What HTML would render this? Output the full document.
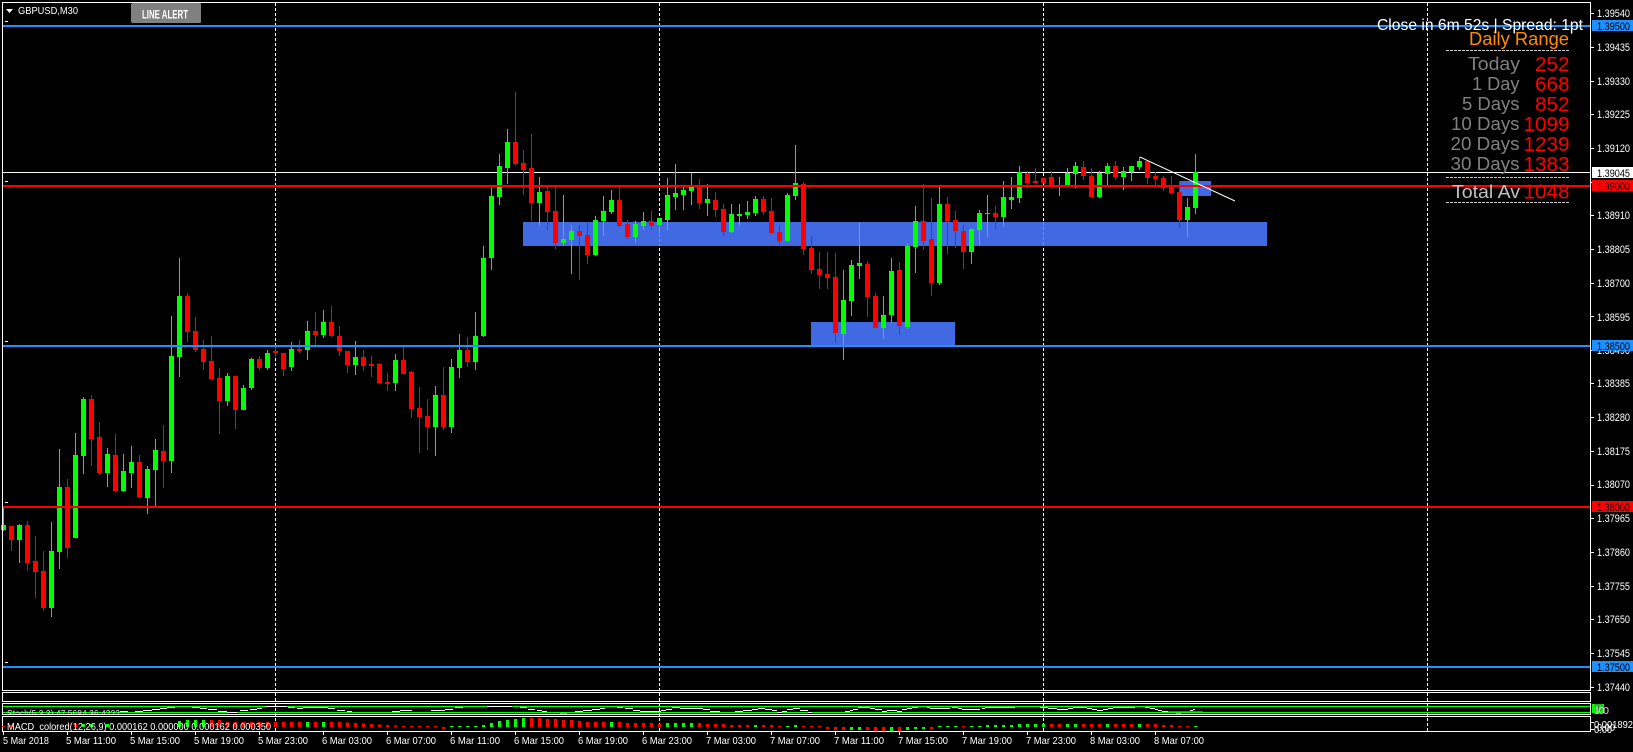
<!DOCTYPE html>
<html lang="en">
<head>
<meta charset="utf-8">
<title>GBPUSD,M30</title>
<style>
html,body{margin:0;padding:0;background:#000;width:1633px;height:752px;overflow:hidden}
svg{display:block;position:absolute;left:0;top:0}
text{font-family:"Liberation Sans",sans-serif;white-space:pre}
.p{font-size:11px;fill:#fff}
.k{font-size:11px;fill:#000}
.t{font-size:10.5px;fill:#fff}
.l{font-size:18.8px;fill:#808080}
.n{font-size:20.7px;fill:#f00}
</style>
</head>
<body>
<svg width="1633" height="752" viewBox="0 0 1633 752" xmlns="http://www.w3.org/2000/svg">
<defs><clipPath id="st"><rect x="3" y="704" width="400" height="10"/></clipPath></defs>
<rect width="1633" height="752" fill="#000"/>

<!-- grid -->
<path shape-rendering="crispEdges" d="M275.5 3V731M659.5 3V731M1043.5 3V731M1427.5 3V731" stroke="#fff" stroke-width="1" stroke-dasharray="3 2" fill="none"/>

<!-- bands -->
<g shape-rendering="crispEdges" fill="#4169e1">
<rect x="523" y="222" width="744" height="24"/>
<rect x="811" y="322" width="144" height="24"/>
<rect x="1180" y="181" width="31" height="15"/>
</g>
<path shape-rendering="crispEdges" d="M659.5 234V246M1043.5 222V246" stroke="#b8944f" stroke-width="1" stroke-dasharray="3 2" fill="none"/>

<!-- white bid line -->
<rect x="3" y="172" width="1587" height="1" fill="#fff" shape-rendering="crispEdges"/>

<!-- candles: green wicks -->
<path shape-rendering="crispEdges" fill="none" stroke="#0f0" stroke-width="1" d="M3.5 507V531M19.5 524V563M51.5 522V617M59.5 449V569M75.5 433V538M83.5 397V474M107.5 448V487M123.5 454V492M131.5 446V488M147.5 466V514M155.5 439V506M171.5 316V473M179.5 258V377M227.5 373V406M243.5 385V410M251.5 358V390M267.5 350V370M291.5 342V371M307.5 321V360M323.5 310V338M355.5 341V375M395.5 354V391M435.5 386V456M451.5 359V433M459.5 334V378M475.5 312V370M483.5 246V337M491.5 188V270M499.5 154V205M507.5 129V184M539.5 177V226M563.5 195V246M571.5 225V274M595.5 216V256M603.5 196V236M611.5 190V214M635.5 221V243M643.5 212V230M659.5 218V233M667.5 178V230M675.5 164V210M683.5 187V210M691.5 173V205M707.5 184V216M731.5 204V233M739.5 204V226M747.5 201V219M755.5 196V216M787.5 193V242M795.5 145V200M843.5 270V360M851.5 260V316M859.5 223V279M883.5 296V339M891.5 258V323M907.5 243V329M915.5 206V273M939.5 187V285M971.5 229V264M979.5 210V245M987.5 195V237M1003.5 181V227M1011.5 177V209M1019.5 166V203M1059.5 177V196M1067.5 168V185M1075.5 162V188M1099.5 171V198M1107.5 163V185M1123.5 167V190M1131.5 166V181M1139.5 157V170M1187.5 198V237M1195.5 154V214"/>
<!-- candles: green bodies -->
<path shape-rendering="crispEdges" fill="none" stroke="#0f0" stroke-width="5" d="M3.5 525V530M19.5 525V540M51.5 551V608M59.5 487V552M75.5 455V538M83.5 399V456M107.5 454V473M123.5 471V491M131.5 462V473M147.5 469V498M155.5 450V470M171.5 356V461M179.5 296V357M227.5 376V401M243.5 388V410M251.5 359V388M267.5 353V368M291.5 349V367M307.5 331V350M323.5 322V335M355.5 357V365M395.5 360V383M435.5 395V427M451.5 367V427M459.5 350V368M475.5 336V362M483.5 258V336M491.5 196V258M499.5 166V197M507.5 142V168M539.5 192V203M563.5 239V243M571.5 231V240M595.5 220V255M603.5 211V221M611.5 200V212M635.5 224V237M643.5 221V226M659.5 218V225M667.5 195V220M675.5 193V197M683.5 190V195M691.5 187V191M707.5 199V203M731.5 214V232M739.5 214V216M747.5 212V215M755.5 199V213M787.5 195V241M795.5 183V196M843.5 300V334M851.5 265V301M859.5 263V266M883.5 315V328M891.5 271V315M907.5 246V327M915.5 221V247M939.5 204V283M971.5 229V252M979.5 213V230M987.5 213V214M1003.5 197V217M1011.5 197V200M1019.5 172V198M1059.5 185V187M1067.5 173V185M1075.5 166V174M1099.5 173V197M1107.5 166V174M1123.5 171V177M1131.5 166V172M1139.5 161V167M1187.5 207V220M1195.5 172V208"/>
<!-- candles: red wicks -->
<path shape-rendering="crispEdges" fill="none" stroke="#f00" stroke-width="1" d="M11.5 526V551M27.5 521V571M35.5 536V598M43.5 551V611M67.5 479V558M91.5 395V466M99.5 422V475M115.5 434V492M139.5 455V498M163.5 425V488M187.5 293V342M195.5 317V352M203.5 340V370M211.5 336V380M219.5 368V434M235.5 376V429M259.5 356V370M275.5 347V357M283.5 353V376M299.5 340V353M315.5 312V345M331.5 306V337M339.5 326V356M347.5 351V373M363.5 350V371M371.5 356V377M379.5 363V384M387.5 373V391M403.5 347V374M411.5 371V418M419.5 387V453M427.5 399V450M443.5 367V430M467.5 337V367M515.5 92V166M523.5 150V195M531.5 134V221M547.5 186V230M555.5 186V249M579.5 225V280M587.5 222V264M619.5 186V227M627.5 220V239M651.5 211V230M699.5 179V209M715.5 192V217M723.5 204V236M763.5 196V215M771.5 198V234M779.5 225V245M803.5 182V255M811.5 236V274M819.5 252V289M827.5 252V289M835.5 253V343M867.5 261V317M875.5 293V328M899.5 262V335M923.5 184V250M931.5 198V296M947.5 197V254M955.5 211V248M963.5 225V269M995.5 206V229M1027.5 171V188M1035.5 168V183M1043.5 178V183M1051.5 171V185M1083.5 161V180M1091.5 168V197M1115.5 161V180M1147.5 161V184M1155.5 172V185M1163.5 176V191M1171.5 176V194M1179.5 181V228"/>
<!-- candles: red bodies -->
<path shape-rendering="crispEdges" fill="none" stroke="#f00" stroke-width="5" d="M11.5 526V540M27.5 525V563M35.5 561V572M43.5 571V608M67.5 487V548M91.5 399V439M99.5 437V473M115.5 455V491M139.5 462V497M163.5 451V461M187.5 296V332M195.5 331V350M203.5 349V362M211.5 361V379M219.5 378V401M235.5 376V410M259.5 359V368M275.5 351V353M283.5 353V369M299.5 349V351M315.5 331V335M331.5 322V336M339.5 336V351M347.5 351V365M363.5 357V366M371.5 364V366M379.5 364V383M387.5 382V384M403.5 360V374M411.5 372V409M419.5 408V417M427.5 416V427M443.5 395V427M467.5 350V362M515.5 142V164M523.5 163V170M531.5 168V203M547.5 191V212M555.5 211V243M579.5 231V236M587.5 235V255M619.5 200V226M627.5 224V237M651.5 221V226M699.5 187V203M715.5 200V210M723.5 209V232M763.5 199V212M771.5 211V233M779.5 232V241M803.5 184V249M811.5 248V270M819.5 269V275M827.5 274V278M835.5 277V333M867.5 264V297M875.5 296V328M899.5 270V326M923.5 221V241M931.5 239V283M947.5 204V221M955.5 220V231M963.5 231V252M995.5 213V217M1027.5 173V183M1035.5 181V183M1043.5 178V183M1051.5 177V185M1083.5 167V176M1091.5 176V197M1115.5 166V177M1147.5 161V178M1155.5 176V179M1163.5 178V188M1171.5 187V193M1179.5 192V220"/>

<!-- horizontal levels -->
<g shape-rendering="crispEdges">
<rect x="3" y="25" width="1587" height="2" fill="#1e90ff"/>
<rect x="3" y="185" width="1587" height="2" fill="#f00"/>
<rect x="3" y="345" width="1587" height="2" fill="#1e90ff"/>
<rect x="3" y="506" width="1587" height="2" fill="#f00"/>
<rect x="3" y="666" width="1587" height="2" fill="#1e90ff"/>
<path d="M5 21.5H8M5 181.5H8M5 341.5H8M5 502.5H8M5 662.5H8" stroke="#fff" stroke-width="1"/>
</g>

<!-- trend line -->
<line x1="1140" y1="157" x2="1235" y2="201" stroke="#fff" stroke-width="1"/>

<!-- frames -->
<g shape-rendering="crispEdges" fill="#fff">
<rect x="2" y="2" width="1589" height="1"/>
<rect x="2" y="2" width="1" height="689"/>
<rect x="1590" y="2" width="1" height="689"/>
<rect x="2" y="690" width="1589" height="1"/>
<rect x="2" y="692" width="1589" height="1"/>
<rect x="2" y="692" width="1" height="10"/>
<rect x="1590" y="692" width="1" height="10"/>
<rect x="2" y="701" width="1589" height="1"/>
<rect x="2" y="703" width="1589" height="1"/>
<rect x="2" y="703" width="1" height="12"/>
<rect x="1590" y="703" width="1" height="12"/>
<rect x="2" y="714" width="1589" height="1"/>
<rect x="2" y="716" width="1589" height="1"/>
<rect x="2" y="716" width="1" height="16"/>
<rect x="1590" y="716" width="1" height="16"/>
<rect x="2" y="731" width="1589" height="1"/>
</g>

<!-- stochastic pane -->
<g shape-rendering="crispEdges">
<rect x="3" y="706" width="1587" height="1" fill="#0f0"/>
<rect x="3" y="712" width="1587" height="1" fill="#0f0"/>
<path fill="none" stroke="#fff" stroke-width="1" d="M120 711.5H128M135 711.5H143M143 710.5H152M152 709.5H160M160 708.5H167M167 707.5H175M192 707.5H200M200 708.5H207M208 709.5H217M218 711.5H227M227 712.5H237M240 710.5H248M250 709.5H257M257 708.5H262M265 706.5H287M288 707.5H295M297 708.5H303M303 707.5H328M328 708.5H335M337 710.5H345M347 711.5H352M392 711.5H400M400 710.5H412M431 710.5H445M445 709.5H453M455 707.5H463M487 706.5H512M520 707.5H527M528 709.5H535M537 710.5H542M542 711.5H547M575 711.5H583M583 710.5H592M592 709.5H600M600 708.5H605M617 707.5H623M625 708.5H633M633 710.5H640M640 711.5H661M661 710.5H666M666 709.5H672M672 707.5H680M680 708.5H703M703 709.5H710M710 711.5H720M735 711.5H743M743 710.5H752M752 709.5H758M758 708.5H765M765 709.5H772M772 710.5H777M777 712.5H782M782 711.5H787M787 709.5H793M793 708.5H800M800 710.5H808M808 712.5H812M845 711.5H850M850 710.5H853M853 709.5H858M858 707.5H870M870 708.5H875M875 709.5H882M882 711.5H887M887 710.5H897M897 711.5H902M902 709.5H907M907 708.5H912M912 707.5H918M927 707.5H930M930 708.5H950M952 707.5H958M958 708.5H962M962 709.5H980M982 708.5H985M985 707.5H1015M1040 707.5H1048M1048 708.5H1057M1057 709.5H1068M1068 708.5H1073M1073 707.5H1087M1087 708.5H1092M1092 709.5H1097M1097 710.5H1103M1103 709.5H1108M1108 708.5H1113M1113 707.5H1135M1145 707.5H1150M1150 708.5H1155M1155 709.5H1158M1158 710.5H1162M1162 711.5H1168M1190 710.5H1193M1193 709.5H1195"/>
<path fill="none" stroke="#2d6fb5" stroke-width="1" d="M1168 711.5H1203"/>
<path fill="none" stroke="#0f0" stroke-width="1" d="M560 713.5H567M1176 713.5H1181"/>
</g>
<text clip-path="url(#st)" class="t" x="7" y="717" textLength="113" lengthAdjust="spacingAndGlyphs" style="fill:#ddd">Stoch(5,3,3) 47.5684 36.4222</text>

<!-- MACD histogram -->
<path shape-rendering="crispEdges" fill="none" stroke="#f00" stroke-width="3" d="M3.5 726V727M11.5 725V727M75.5 724V727M107.5 725V727M219.5 720V727M211.5 720V727M227.5 722V727M235.5 722V727M243.5 722V727M251.5 722V727M259.5 722V727M267.5 722V727M275.5 722V727M283.5 722V727M291.5 722V727M299.5 722V727M315.5 722V727M331.5 722V727M339.5 722V727M347.5 722.5V727M355.5 723V727M363.5 723.5V727M371.5 724V727M379.5 724.5V727M387.5 725V727M395.5 725.5V727M403.5 726V727M411.5 726V727M419.5 726V727M427.5 726V727M435.5 726V727M443.5 727V729M531.5 718V727M539.5 718V727M547.5 719V727M555.5 719V727M563.5 720V727M571.5 720V727M579.5 721V727M587.5 722V727M595.5 722V727M603.5 722V727M619.5 722V727M627.5 723V727M635.5 723V727M643.5 723V727M651.5 723V727M659.5 724V727M699.5 723V727M707.5 724V727M715.5 724V727M723.5 724V727M731.5 725V727M739.5 725V727M747.5 725V727M763.5 725V727M771.5 725V727M779.5 726V727M803.5 726V727M811.5 726V727M819.5 726V727M827.5 727V729M835.5 727V730M843.5 727V730M867.5 727V730M875.5 727V731M883.5 727V731M899.5 727V731M931.5 727V729M963.5 726V727M1051.5 724V727M1059.5 724V727M1083.5 724V727M1091.5 724V727M1099.5 724V727M1115.5 724V727M1123.5 724V727M1131.5 724V727M1147.5 724V727M1155.5 724V727M1163.5 725V727M1171.5 725V727M1179.5 726V727M1187.5 726V727"/>
<path shape-rendering="crispEdges" fill="none" stroke="#0f0" stroke-width="3" d="M83.5 724V727M91.5 724V727M107.5 724V727M179.5 721V727M187.5 720V727M195.5 720V727M203.5 720V727M307.5 722V727M323.5 722V727M451.5 726V727M459.5 726V727M467.5 726V727M475.5 726V727M483.5 725V727M491.5 723V727M499.5 721V727M507.5 720V727M515.5 719V727M523.5 718V727M611.5 722V727M667.5 723V727M675.5 723V727M683.5 723V727M691.5 723V727M755.5 725V727M787.5 726V727M795.5 725V727M851.5 727V730M859.5 727V730M891.5 727V731M907.5 727V730M915.5 727V729M923.5 727V729M939.5 726V727M947.5 726V727M955.5 726V727M971.5 726V727M979.5 726V727M987.5 725V727M995.5 725V727M1003.5 725V727M1011.5 725V727M1019.5 724V727M1027.5 724V727M1035.5 724V727M1043.5 724V727M1067.5 724V727M1075.5 724V727M1107.5 724V727M1139.5 724V727M1195.5 726V727"/>
<text class="t" x="7" y="730" textLength="264" lengthAdjust="spacingAndGlyphs">MACD_colored(12,26,9) 0.000162 0.000000 0.000162 0.000350</text>

<!-- price axis ticks -->
<path shape-rendering="crispEdges" stroke="#fff" stroke-width="1" fill="none" d="M1591 13.5H1594M1591 47.5H1594M1591 81.5H1594M1591 114.5H1594M1591 148.5H1594M1591 182.5H1594M1591 215.5H1594M1591 249.5H1594M1591 283.5H1594M1591 316.5H1594M1591 350.5H1594M1591 383.5H1594M1591 417.5H1594M1591 451.5H1594M1591 485.5H1594M1591 518.5H1594M1591 552.5H1594M1591 586.5H1594M1591 619.5H1594M1591 653.5H1594M1591 687.5H1594M1591 722.5H1594M1591 729.5H1594"/>
<g class="p">
<text class="p" x="1597" y="17" textLength="33" lengthAdjust="spacingAndGlyphs">1.39540</text>
<text class="p" x="1597" y="51" textLength="33" lengthAdjust="spacingAndGlyphs">1.39435</text>
<text class="p" x="1597" y="85" textLength="33" lengthAdjust="spacingAndGlyphs">1.39330</text>
<text class="p" x="1597" y="118" textLength="33" lengthAdjust="spacingAndGlyphs">1.39225</text>
<text class="p" x="1597" y="152" textLength="33" lengthAdjust="spacingAndGlyphs">1.39120</text>
<text class="p" x="1597" y="219" textLength="33" lengthAdjust="spacingAndGlyphs">1.38910</text>
<text class="p" x="1597" y="253" textLength="33" lengthAdjust="spacingAndGlyphs">1.38805</text>
<text class="p" x="1597" y="287" textLength="33" lengthAdjust="spacingAndGlyphs">1.38700</text>
<text class="p" x="1597" y="321" textLength="33" lengthAdjust="spacingAndGlyphs">1.38595</text>
<text class="p" x="1597" y="354" textLength="33" lengthAdjust="spacingAndGlyphs">1.38490</text>
<text class="p" x="1597" y="387" textLength="33" lengthAdjust="spacingAndGlyphs">1.38385</text>
<text class="p" x="1597" y="421" textLength="33" lengthAdjust="spacingAndGlyphs">1.38280</text>
<text class="p" x="1597" y="455" textLength="33" lengthAdjust="spacingAndGlyphs">1.38175</text>
<text class="p" x="1597" y="488" textLength="33" lengthAdjust="spacingAndGlyphs">1.38070</text>
<text class="p" x="1597" y="522" textLength="33" lengthAdjust="spacingAndGlyphs">1.37965</text>
<text class="p" x="1597" y="556" textLength="33" lengthAdjust="spacingAndGlyphs">1.37860</text>
<text class="p" x="1597" y="590" textLength="33" lengthAdjust="spacingAndGlyphs">1.37755</text>
<text class="p" x="1597" y="623" textLength="33" lengthAdjust="spacingAndGlyphs">1.37650</text>
<text class="p" x="1597" y="657" textLength="33" lengthAdjust="spacingAndGlyphs">1.37545</text>
<text class="p" x="1597" y="691" textLength="33" lengthAdjust="spacingAndGlyphs">1.37440</text>
</g>

<!-- price axis tags -->
<g shape-rendering="crispEdges">
<rect x="1592" y="20" width="41" height="11" fill="#1e90ff"/>
<rect x="1592" y="167" width="41" height="11" fill="#fff"/>
<rect x="1592" y="180" width="41" height="11" fill="#f00"/>
<rect x="1592" y="340" width="41" height="11" fill="#1e90ff"/>
<rect x="1592" y="501" width="41" height="11" fill="#f00"/>
<rect x="1592" y="661" width="41" height="11" fill="#1e90ff"/>
<rect x="1592" y="704" width="12" height="9" fill="#0f0"/>
</g>
<text class="k" x="1597" y="30" textLength="33" lengthAdjust="spacingAndGlyphs">1.39500</text>
<text class="k" x="1597" y="177" textLength="33" lengthAdjust="spacingAndGlyphs">1.39045</text>
<text class="k" x="1597" y="190" textLength="33" lengthAdjust="spacingAndGlyphs">1.39000</text>
<text class="k" x="1597" y="350" textLength="33" lengthAdjust="spacingAndGlyphs">1.38500</text>
<text class="k" x="1597" y="511" textLength="33" lengthAdjust="spacingAndGlyphs">1.38000</text>
<text class="k" x="1597" y="671" textLength="33" lengthAdjust="spacingAndGlyphs">1.37500</text>
<text x="1594" y="711" style="font-size:10px;fill:#666" textLength="9">90</text>
<text x="1594" y="714" style="font-size:10.5px;fill:#ddd" textLength="15">100</text>
<text class="t" x="1594" y="728" textLength="39" lengthAdjust="spacingAndGlyphs">0.001892</text>
<text class="t" x="1594" y="733" style="font-size:10px" textLength="18" lengthAdjust="spacingAndGlyphs">0.00</text>
<text class="t" x="1597" y="731" style="font-size:10px" textLength="18" lengthAdjust="spacingAndGlyphs">0.00</text>

<!-- time axis -->
<path shape-rendering="crispEdges" stroke="#fff" stroke-width="1" fill="none" d="M3.5 732V735M67.5 732V735M131.5 732V735M195.5 732V735M259.5 732V735M323.5 732V735M387.5 732V735M451.5 732V735M515.5 732V735M579.5 732V735M643.5 732V735M707.5 732V735M771.5 732V735M835.5 732V735M899.5 732V735M963.5 732V735M1027.5 732V735M1091.5 732V735M1155.5 732V735"/>
<text class="t" x="3" y="744" textLength="46" lengthAdjust="spacingAndGlyphs">5 Mar 2018</text>
<text class="t" x="66" y="744" textLength="50" lengthAdjust="spacingAndGlyphs">5 Mar 11:00</text>
<text class="t" x="130" y="744" textLength="50" lengthAdjust="spacingAndGlyphs">5 Mar 15:00</text>
<text class="t" x="194" y="744" textLength="50" lengthAdjust="spacingAndGlyphs">5 Mar 19:00</text>
<text class="t" x="258" y="744" textLength="50" lengthAdjust="spacingAndGlyphs">5 Mar 23:00</text>
<text class="t" x="322" y="744" textLength="50" lengthAdjust="spacingAndGlyphs">6 Mar 03:00</text>
<text class="t" x="386" y="744" textLength="50" lengthAdjust="spacingAndGlyphs">6 Mar 07:00</text>
<text class="t" x="450" y="744" textLength="50" lengthAdjust="spacingAndGlyphs">6 Mar 11:00</text>
<text class="t" x="514" y="744" textLength="50" lengthAdjust="spacingAndGlyphs">6 Mar 15:00</text>
<text class="t" x="578" y="744" textLength="50" lengthAdjust="spacingAndGlyphs">6 Mar 19:00</text>
<text class="t" x="642" y="744" textLength="50" lengthAdjust="spacingAndGlyphs">6 Mar 23:00</text>
<text class="t" x="706" y="744" textLength="50" lengthAdjust="spacingAndGlyphs">7 Mar 03:00</text>
<text class="t" x="770" y="744" textLength="50" lengthAdjust="spacingAndGlyphs">7 Mar 07:00</text>
<text class="t" x="834" y="744" textLength="50" lengthAdjust="spacingAndGlyphs">7 Mar 11:00</text>
<text class="t" x="898" y="744" textLength="50" lengthAdjust="spacingAndGlyphs">7 Mar 15:00</text>
<text class="t" x="962" y="744" textLength="50" lengthAdjust="spacingAndGlyphs">7 Mar 19:00</text>
<text class="t" x="1026" y="744" textLength="50" lengthAdjust="spacingAndGlyphs">7 Mar 23:00</text>
<text class="t" x="1090" y="744" textLength="50" lengthAdjust="spacingAndGlyphs">8 Mar 03:00</text>
<text class="t" x="1154" y="744" textLength="50" lengthAdjust="spacingAndGlyphs">8 Mar 07:00</text>

<!-- chart title -->
<polygon points="6,9 13,9 9.5,13" fill="#fff"/>
<text class="t" x="18" y="14" textLength="60" lengthAdjust="spacingAndGlyphs">GBPUSD,M30</text>

<!-- line alert button -->
<rect x="129" y="2" width="3" height="1" fill="#fff"/>
<polygon points="132,3 200,3 201,4 201,22 200,23 132,23 131,22 131,4" fill="#808080" shape-rendering="crispEdges"/>
<text x="142" y="18.5" textLength="46" lengthAdjust="spacingAndGlyphs" style="font-size:12px;font-weight:bold;fill:#fff">LINE ALERT</text>

<!-- top right panel -->
<text x="1377" y="30" textLength="206" lengthAdjust="spacingAndGlyphs" style="font-size:15.7px;fill:#fff">Close in 6m 52s | Spread: 1pt</text>
<text x="1469" y="45" textLength="100" lengthAdjust="spacingAndGlyphs" style="font-size:18.4px;fill:#ff8c00">Daily Range</text>
<path shape-rendering="crispEdges" d="M1446 50.5H1569M1446 177.5H1569M1446 202.5H1569" stroke="#c8c8c8" stroke-width="1" stroke-dasharray="3 1" fill="none"/>
<text class="l" x="1468" y="70" textLength="52" lengthAdjust="spacingAndGlyphs">Today</text>
<text class="l" x="1472" y="90" textLength="47.5" lengthAdjust="spacingAndGlyphs">1 Day</text>
<text class="l" x="1462" y="110" textLength="57.5" lengthAdjust="spacingAndGlyphs">5 Days</text>
<text class="l" x="1451" y="130" textLength="68.5" lengthAdjust="spacingAndGlyphs">10 Days</text>
<text class="l" x="1450.5" y="150" textLength="69" lengthAdjust="spacingAndGlyphs">20 Days</text>
<text class="l" x="1450.5" y="170" textLength="69" lengthAdjust="spacingAndGlyphs">30 Days</text>
<text class="l" x="1452" y="198" textLength="68" lengthAdjust="spacingAndGlyphs" style="fill:#c0c0c0">Total Av</text>
<text class="n" x="1535" y="71" textLength="34.5" lengthAdjust="spacingAndGlyphs">252</text>
<text class="n" x="1535" y="91" textLength="34.5" lengthAdjust="spacingAndGlyphs">668</text>
<text class="n" x="1535" y="111" textLength="34.5" lengthAdjust="spacingAndGlyphs">852</text>
<text class="n" x="1523.5" y="131" textLength="46" lengthAdjust="spacingAndGlyphs">1099</text>
<text class="n" x="1523.5" y="151" textLength="46" lengthAdjust="spacingAndGlyphs">1239</text>
<text class="n" x="1523.5" y="171" textLength="46" lengthAdjust="spacingAndGlyphs">1383</text>
<text class="n" x="1523.5" y="198.5" textLength="46" lengthAdjust="spacingAndGlyphs">1048</text>
</svg>
</body>
</html>
